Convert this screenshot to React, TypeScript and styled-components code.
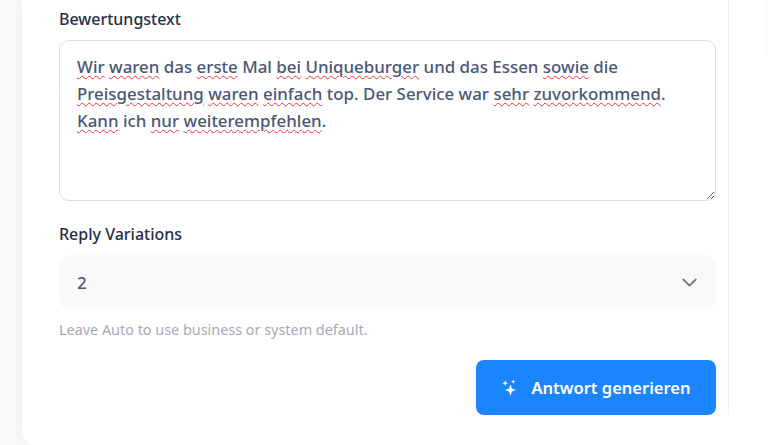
import React from 'react';
import styled, { createGlobalStyle } from 'styled-components';
import { ChevronDown } from 'lucide-react';

const GlobalStyle = createGlobalStyle`
   html, body {
      margin: 0;
      padding: 0;
      height: 445px;
      overflow: hidden;
      background: #f9f9f9;
      font-family: "Noto Sans", "Open Sans", sans-serif;
   }
`;

const review: [string, boolean][] = [
   ['Wir', true], [' ', false], ['waren', true], [' das ', false], ['erste', true],
   [' Mal ', false], ['bei', true], [' ', false], ['Uniqueburger', true],
   [' und das Essen ', false], ['sowie', true], [' die ', false],
   ['Preisgestaltung', true], [' ', false], ['waren', true], [' ', false], ['einfach', true],
   [' top. Der Service war ', false], ['sehr', true], [' ', false], ['zuvorkommend', true],
   ['. ', false], ['Kann', true], [' ich ', false], ['nur', true], [' ', false],
   ['weiterempfehlen', true], ['.', false],
];

const Sparkles = () => (
   <svg width="16" height="18" viewBox="0 0 16 18" fill="#fff">
      <path d="M8.5 5.6 10 9.6 14 11.1 10 12.6 8.5 16.8 7 12.6 3 11.1 7 9.6Z" />
      <path d="M3.2 1.2 4 3.4 6.2 4.2 4 5 3.2 7.2 2.4 5 .2 4.2 2.4 3.4Z" />
      <path d="M11.2 .4 11.8 2 13.4 2.6 11.8 3.2 11.2 4.8 10.6 3.2 9 2.6 10.6 2Z" />
   </svg>
);

const App = () => {
   return (
      <>
         <GlobalStyle />
         <Page>
            <Card>
               <Form>
                  <Label>Bewertungstext</Label>
                  <ReviewBox>
                     {review.map(([text, flagged], index) =>
                        flagged ? <Misspelled key={index}>{text}</Misspelled> : text,
                     )}
                  </ReviewBox>
                  <VariationsLabel>Reply Variations</VariationsLabel>
                  <Select>
                     <span>2</span>
                     <ChevronDown size={25} color="#6b7289" strokeWidth={1.7} />
                  </Select>
                  <Hint>Leave Auto to use business or system default.</Hint>
                  <Actions>
                     <GenerateButton>
                        <Sparkles />
                        Antwort generieren
                     </GenerateButton>
                  </Actions>
               </Form>
            </Card>
            <SideShadow />
         </Page>
      </>
   );
};

const Page = styled.div`
   display: flex;
   height: 445px;
   padding-left: 22px;
   box-sizing: border-box;
`;

const Card = styled.div`
   flex: 1;
   height: 445px;
   background: #fff;
   border-bottom-left-radius: 13px;
   padding-left: 37px;
   box-shadow: -6px 0 12px rgba(0, 0, 0, 0.022);
`;

const Form = styled.div`
   width: 657px;
   height: 415px;
   box-sizing: content-box;
   padding-right: 12px;
   border-right: 1px solid #f0f0f3;
   display: flex;
   flex-direction: column;
`;

const Label = styled.div`
   font-size: 16px;
   font-weight: 500;
   line-height: 20px;
   margin-top: 9px;
   margin-bottom: 11px;
   color: #252f4a;
`;

const VariationsLabel = styled(Label)`
   margin-top: 23px;
`;

const ReviewBox = styled.div`
   height: 161px;
   box-sizing: border-box;
   padding: 12px 17px;
   border: 1px solid #dbdfe9;
   border-radius: 10px;
   font-size: 16.9px;
   font-weight: 500;
   line-height: 27px;
   color: #4b5675;
   overflow: auto;
   resize: vertical;
`;

const Misspelled = styled.span`
   text-decoration: underline wavy #f0333c 1.3px;
   text-underline-offset: 2px;
`;

const Select = styled.div`
   height: 54px;
   box-sizing: border-box;
   padding: 0 14px 0 18px;
   display: flex;
   align-items: center;
   justify-content: space-between;
   background: #f9f9f9;
   border-radius: 10px;
   font-size: 17px;
   font-weight: 500;
   color: #4b5675;
`;

const Hint = styled.div`
   font-size: 14.4px;
   line-height: 20px;
   margin-top: 11px;
   color: #a6a9bd;
`;

const Actions = styled.div`
   display: flex;
   justify-content: flex-end;
   margin-top: 20px;
`;

const GenerateButton = styled.button`
   width: 240px;
   height: 55px;
   display: flex;
   align-items: center;
   justify-content: center;
   gap: 14px;
   border: none;
   border-radius: 8px;
   background: #1b84ff;
   color: #fff;
   font-family: inherit;
   font-size: 16.5px;
   font-weight: 600;
`;

const SideShadow = styled.div`
   position: absolute;
   top: 0;
   right: 0;
   width: 6px;
   height: 55px;
   background: linear-gradient(90deg, #fff, #fbfbfb);
`;

export default App;
